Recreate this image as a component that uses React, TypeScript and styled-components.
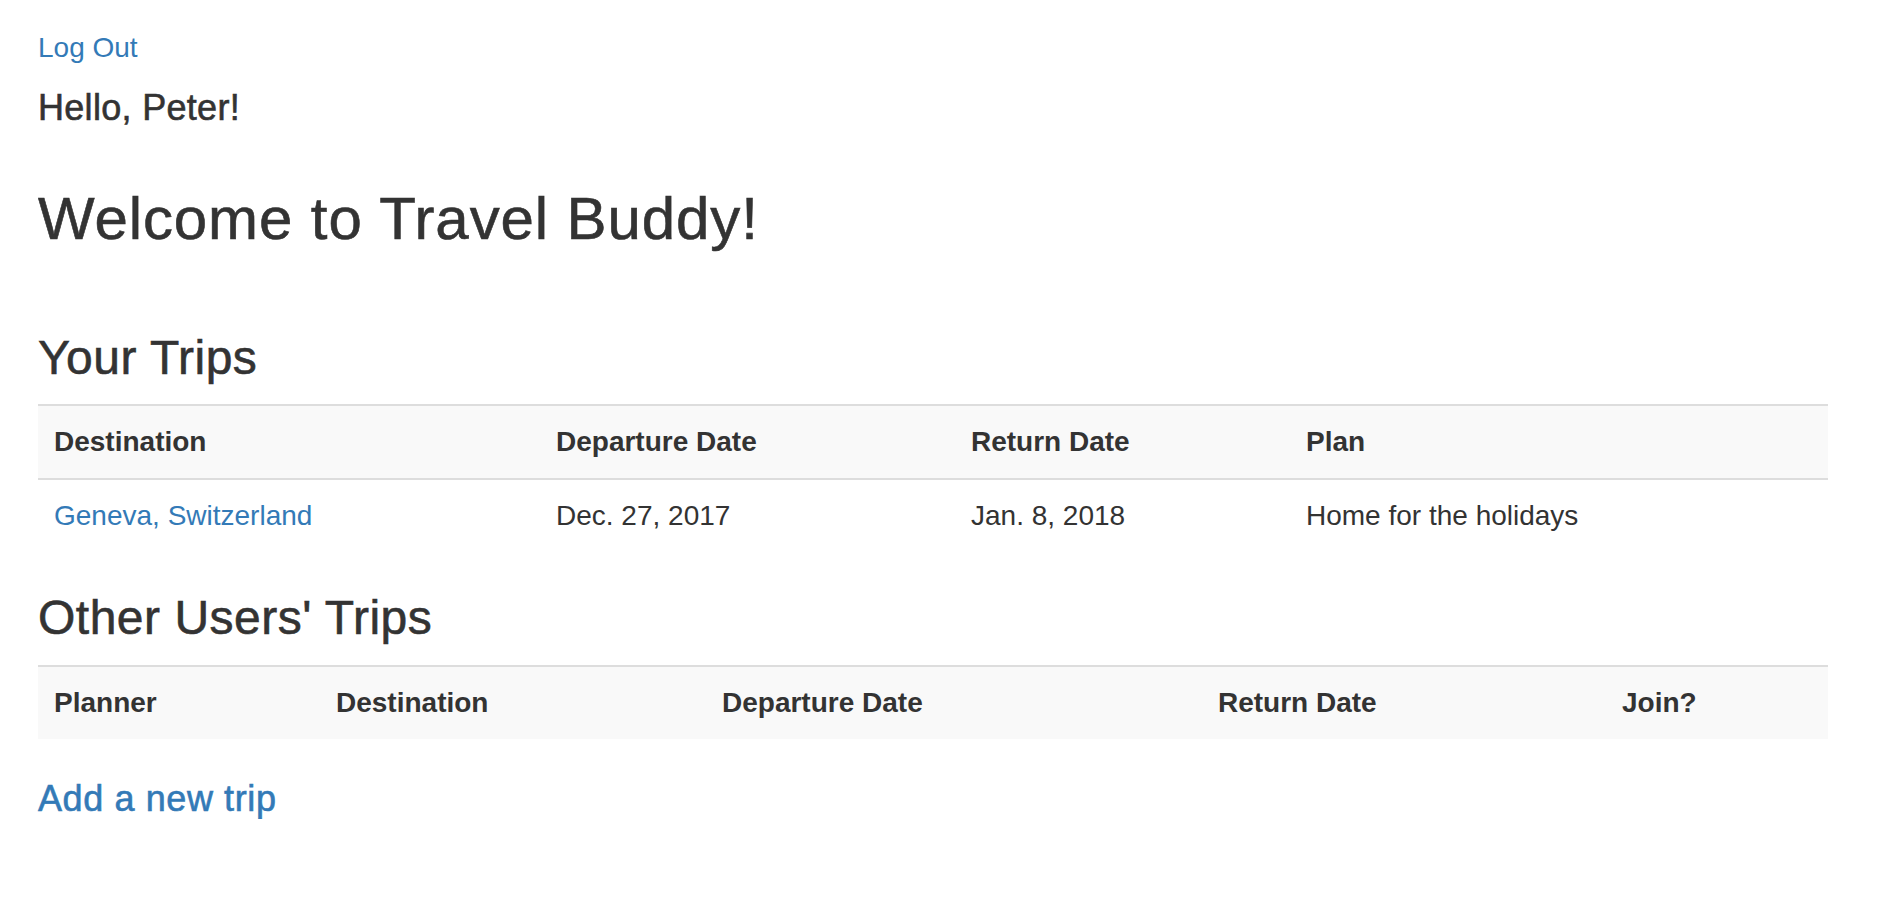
import styled, { createGlobalStyle, css } from "styled-components";

const GlobalStyle = createGlobalStyle`
  body {
    margin: 0;
    background: #fff;
    color: #333;
    font-family: "Liberation Sans", Arial, sans-serif;
  }
`;

// headings in the original are a medium weight, which Liberation Sans doesn't have
const mediumWeight = css`
  font-weight: 500;
  -webkit-text-stroke: 0.6px currentColor;
`;

const Page = styled.div`
  padding: 28px 0 0 38px;
`;

const LogOutLink = styled.a`
  display: block;
  font-size: 28px;
  line-height: 40px;
  color: #337ab7;
  text-decoration: none;
`;

const Greeting = styled.h4`
  ${mediumWeight};
  margin: 20px 0 0;
  font-size: 36px;
  line-height: 1.1;
  letter-spacing: 0.3px;
`;

const Title = styled.h2`
  ${mediumWeight};
  margin: 58px 0 0;
  font-size: 60px;
  line-height: 1.1;
  letter-spacing: 0.9px;
`;

const SectionHeading = styled.h3<{ $top: number }>`
  ${mediumWeight};
  margin: ${(p) => p.$top}px 0 20px;
  font-size: 48px;
  line-height: 1.1;
  letter-spacing: 0.5px;
`;

const TripTable = styled.table`
  width: 1790px;
  table-layout: fixed;
  border-collapse: separate;
  border-spacing: 0;
  margin-bottom: 40px;
  font-size: 28px;
`;

const Col = styled.col<{ $width: number }>`
  width: ${(p) => p.$width}px;
`;

const Row = styled.tr<{ $striped?: boolean }>`
  background: ${(p) => (p.$striped ? "#f9f9f9" : "transparent")};
`;

const HeadCell = styled.th`
  padding: 16px;
  line-height: 40px;
  text-align: left;
  font-weight: 700;
  border-top: 2px solid #ddd;
`;

const Cell = styled.td`
  padding: 16px;
  line-height: 40px;
  text-align: left;
  border-top: 2px solid #ddd;
`;

const TableLink = styled.a`
  color: #337ab7;
  text-decoration: none;
`;

const AddTrip = styled.h4`
  ${mediumWeight};
  margin: 0;
  font-size: 36px;
  line-height: 1.1;
  letter-spacing: 0.6px;
`;

const AddTripLink = styled.a`
  color: #337ab7;
  text-decoration: none;
`;

const yourColumns = [
  { label: "Destination", width: 502 },
  { label: "Departure Date", width: 415 },
  { label: "Return Date", width: 335 },
  { label: "Plan", width: 538 },
];

const otherColumns = [
  { label: "Planner", width: 282 },
  { label: "Destination", width: 386 },
  { label: "Departure Date", width: 496 },
  { label: "Return Date", width: 404 },
  { label: "Join?", width: 222 },
];

const yourTrips = [
  {
    id: 1,
    destination: "Geneva, Switzerland",
    departure: "Dec. 27, 2017",
    returnDate: "Jan. 8, 2018",
    plan: "Home for the holidays",
  },
];

function App() {
  return (
    <>
      <GlobalStyle />
      <Page>
        <LogOutLink href="#">Log Out</LogOutLink>
        <Greeting>Hello, Peter!</Greeting>
        <Title>Welcome to Travel Buddy!</Title>

        <SectionHeading $top={80}>Your Trips</SectionHeading>
        <TripTable>
          <colgroup>
            {yourColumns.map((c) => (
              <Col key={c.label} $width={c.width} />
            ))}
          </colgroup>
          <tbody>
            <Row $striped>
              {yourColumns.map((c) => (
                <HeadCell key={c.label}>{c.label}</HeadCell>
              ))}
            </Row>
            {yourTrips.map((trip) => (
              <Row key={trip.id}>
                <Cell>
                  <TableLink href="#">{trip.destination}</TableLink>
                </Cell>
                <Cell>{trip.departure}</Cell>
                <Cell>{trip.returnDate}</Cell>
                <Cell>{trip.plan}</Cell>
              </Row>
            ))}
          </tbody>
        </TripTable>

        <SectionHeading $top={0}>Other Users' Trips</SectionHeading>
        <TripTable>
          <colgroup>
            {otherColumns.map((c) => (
              <Col key={c.label} $width={c.width} />
            ))}
          </colgroup>
          <tbody>
            <Row $striped>
              {otherColumns.map((c) => (
                <HeadCell key={c.label}>{c.label}</HeadCell>
              ))}
            </Row>
          </tbody>
        </TripTable>

        <AddTrip>
          <AddTripLink href="#">Add a new trip</AddTripLink>
        </AddTrip>
      </Page>
    </>
  );
}

export default App;
